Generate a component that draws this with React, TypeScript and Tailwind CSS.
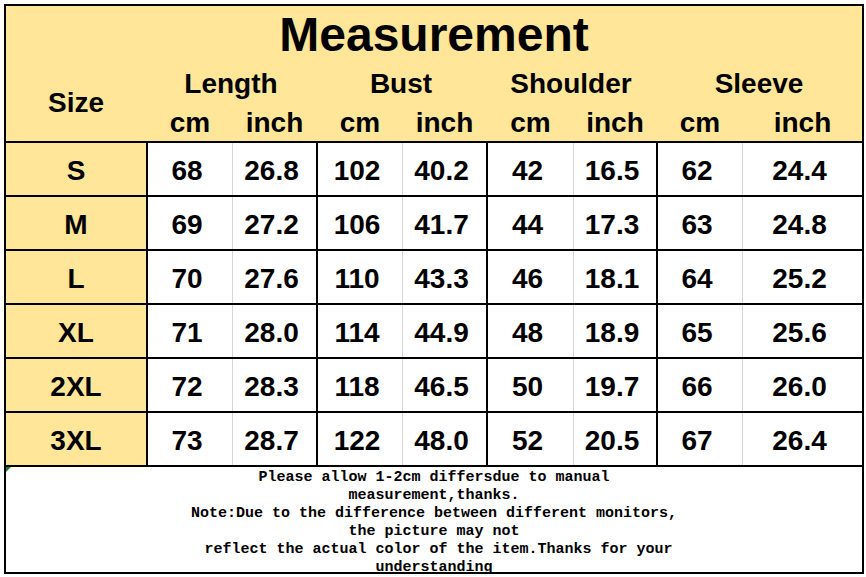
import React from "react";

const rows: [string, string[]][] = [
  ["S", ["68", "26.8", "102", "40.2", "42", "16.5", "62", "24.4"]],
  ["M", ["69", "27.2", "106", "41.7", "44", "17.3", "63", "24.8"]],
  ["L", ["70", "27.6", "110", "43.3", "46", "18.1", "64", "25.2"]],
  ["XL", ["71", "28.0", "114", "44.9", "48", "18.9", "65", "25.6"]],
  ["2XL", ["72", "28.3", "118", "46.5", "50", "19.7", "66", "26.0"]],
  ["3XL", ["73", "28.7", "122", "48.0", "52", "20.5", "67", "26.4"]],
];

const colCls = [
  "w-[86px] border-l-2 border-black",
  "w-[84px] border-l border-[#d4d4d4]",
  "w-[86px] border-l-2 border-black",
  "w-[84px] border-l border-[#d4d4d4]",
  "w-[87px] border-l-2 border-black",
  "w-[83px] border-l border-[#d4d4d4]",
  "w-[86px] border-l-2 border-black",
  "w-[120px] border-l border-[#d4d4d4]",
];

const groups: [string, string][] = [
  ["Length", "w-[170px]"],
  ["Bust", "w-[170px]"],
  ["Shoulder", "w-[170px]"],
  ["Sleeve", "w-[206px]"],
];

const subCls = [
  ["w-[86px] border-l-2", "w-[84px] border-l"],
  ["w-[86px] border-l-2", "w-[84px] border-l"],
  ["w-[87px] border-l-2", "w-[83px] border-l"],
  ["w-[86px] border-l-2", "w-[120px] border-l"],
];

export default function App() {
  return (
    <div className="w-[866px] h-[577px] bg-white pt-[4px] pl-[4px]">
      <div
        className="w-[860px] h-[570px] border-2 border-black text-black"
        style={{ fontFamily: '"Liberation Sans", Arial, sans-serif' }}
      >
        {/* Header */}
        <div className="h-[135px] bg-[#FFE699] font-bold">
          <div className="h-[58px] flex items-center justify-center text-[48px] leading-[48px]">
            Measurement
          </div>
          <div className="flex h-[77px]">
            <div className="w-[140px] flex items-center justify-center text-[28px] leading-[28px]">
              Size
            </div>
            {groups.map(([g, w], gi) => (
              <div key={g} className={`${w} flex flex-col`}>
                <div className="h-[40px] flex items-center justify-center text-[28px] leading-[28px]">
                  {g}
                </div>
                <div className="h-[37px] flex pt-[1px]">
                  <div
                    className={`${subCls[gi][0]} border-transparent flex items-center justify-center text-[28px] leading-[28px]`}
                  >
                    cm
                  </div>
                  <div
                    className={`${subCls[gi][1]} border-transparent flex items-center justify-center text-[28px] leading-[28px]`}
                  >
                    inch
                  </div>
                </div>
              </div>
            ))}
          </div>
        </div>

        {/* Data rows */}
        {rows.map(([size, vals]) => (
          <div key={size} className="flex h-[54px] border-t-2 border-black font-bold text-[28px] leading-[28px]">
            <div className="w-[140px] bg-[#FFE699] flex items-center justify-center pt-[3px]">{size}</div>
            {vals.map((v, i) => (
              <div
                key={i}
                className={`${colCls[i]} bg-white flex items-center justify-center pr-[6px] pt-[3px]`}
              >
                {v}
              </div>
            ))}
          </div>
        ))}

        {/* Footer note */}
        <div
          className="relative h-[107px] border-t-2 border-black pt-[2px] flex flex-col items-center font-bold text-[15px] leading-[18px] whitespace-pre"
          style={{ fontFamily: '"Liberation Mono", "Courier New", monospace' }}
        >
          <div className="absolute left-0 top-0 w-0 h-0 border-t-[5px] border-r-[5px] border-t-[#1e7b34] border-r-transparent" />
          <div>Please allow 1-2cm differsdue to manual</div>
          <div>measurement,thanks.</div>
          <div>Note:Due to the difference between different monitors,</div>
          <div>the picture may not</div>
          <div> reflect the actual color of the item.Thanks for your</div>
          <div className="underline underline-offset-[2px]">understanding</div>
        </div>
      </div>
    </div>
  );
}
